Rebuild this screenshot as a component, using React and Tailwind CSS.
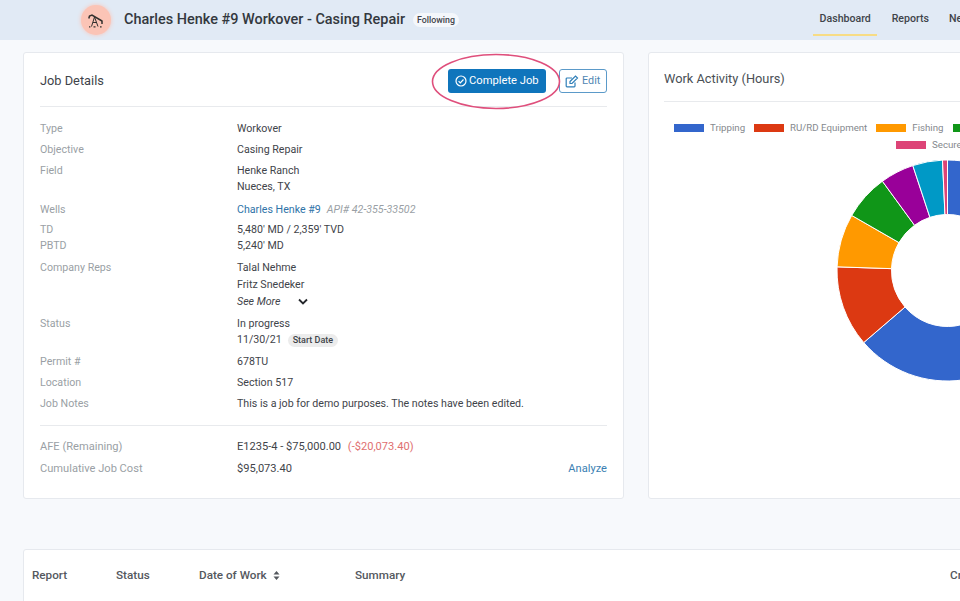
import React from "react";

function pt(r, a) {
  const t = (a * Math.PI) / 180;
  return [110.5 + r * Math.sin(t), 110.5 - r * Math.cos(t)];
}
function slice(a0, a1) {
  const R = 110.5, r = 56;
  const [x0, y0] = pt(R, a0);
  const [x1, y1] = pt(R, a1);
  const [x2, y2] = pt(r, a1);
  const [x3, y3] = pt(r, a0);
  const large = a1 - a0 > 180 ? 1 : 0;
  return `M${x0} ${y0}A${R} ${R} 0 ${large} 1 ${x1} ${y1}L${x2} ${y2}A${r} ${r} 0 ${large} 0 ${x3} ${y3}Z`;
}
const slices = [
  [0, 229.3, "#3366cc"],
  [229.3, 271.9, "#dc3912"],
  [271.9, 299.9, "#ff9900"],
  [299.9, 323.9, "#109618"],
  [323.9, 341.7, "#990099"],
  [341.7, 357.4, "#0099c6"],
  [357.4, 360, "#dd4477"],
];

function Row({ label, className = "", children }) {
  return (
    <div className={`flex leading-4 ${className}`}>
      <div className="w-[197px] shrink-0 text-[#9a9fa5]">{label}</div>
      <div className="text-[#3f444a]">{children}</div>
    </div>
  );
}

function Legend({ color, label }) {
  return (
    <span className="flex shrink-0 items-center">
      <span className="h-2 w-[30px]" style={{ background: color }} />
      {label && <span className="ml-1.5 text-[9.7px] leading-3 text-[#85898e]">{label}</span>}
    </span>
  );
}

export default function App() {
  return (
    <div className="relative h-[601px] w-[960px] overflow-hidden bg-[#f7f9fc] font-['Roboto',sans-serif] text-[10.65px]">
      <header className="flex h-10 items-center bg-[#e1eaf5] pl-[81px]">
        <div className="flex h-[30px] w-[30px] items-center justify-center rounded-full bg-[#fbc4b6] shadow-[0_0_4px_#fbc4b6]">
          <svg width="18" height="18" viewBox="0 0 18 18" fill="none" stroke="#33302e" strokeWidth="1">
            <path d="M1.8 7.5 2.5 5 5 4 15 10" strokeWidth="1.5" />
            <path d="M15 9.5v3.5" strokeWidth="1.5" />
            <path d="M7.5 6 4.5 15.5M7.5 6l3.5 9.5M6 11.5h4" />
            <path d="M2 15.8h1.4M6.5 15.8h2M13 15.8h1.6" strokeWidth="1.2" />
          </svg>
        </div>
        <h1 className="ml-[13px] text-[14.45px] font-medium text-[#33383e]">Charles Henke #9 Workover - Casing Repair</h1>
        <span className="ml-2 rounded-full bg-[#f4f7fb] px-1 text-[8.8px] font-medium leading-[14px] text-[#3f444a]">Following</span>
        <nav className="ml-auto flex h-10 shrink-0 items-start text-[10.6px] font-medium text-[#3f444a]">
          <a className="mr-[7px] h-[36px] w-16 border-b-2 border-[#f7dc85] pl-px pt-[11px] text-center leading-[15px]">Dashboard</a>
          <a className="ml-[8px] pt-[11px] leading-[15px]">Reports</a>
          <a className="ml-[20px] w-[11px] overflow-hidden pt-[11px] leading-[15px]">Ne</a>
        </nav>
      </header>

      <main className="flex items-start gap-[24px] pl-[23px] pt-3">
        <section className="h-[447px] w-[601px] shrink-0 rounded-[3px] border border-[#e6e9ee] bg-white px-4">
          <div className="flex h-[54px] items-center justify-between border-b border-[#e8eaed] pt-[3px]">
            <h2 className="text-[12.8px] text-[#3f444a]">Job Details</h2>
            <div className="flex items-center gap-[13px]">
              <button className="flex h-6 w-[98px] items-center gap-[2px] rounded-[3px] bg-[#0f75bc] pl-[7px] text-[11.2px] text-white">
                <svg width="12" height="12" viewBox="0 0 12 12" fill="none" stroke="white" strokeWidth="1.2">
                  <circle cx="6" cy="6" r="5" />
                  <path d="M3.6 6.1 5.3 7.8 8.5 4.5" />
                </svg>
                Complete Job
              </button>
              <button className="flex h-6 w-12 items-center gap-[3px] rounded-[3px] border border-[#5b9ac9] bg-white pl-[5px] text-[10.8px] text-[#4f86b3]">
                <svg width="14" height="13" viewBox="0 0 14 13" fill="none" stroke="#2f7fb8" strokeWidth="1.2">
                  <path d="M10 7.5V11a.8.8 0 0 1-.8.8H2a.8.8 0 0 1-.8-.8V3.8A.8.8 0 0 1 2 3h5" />
                  <path d="M5 6.5 10.5 1 12.5 3 7 8.5H5z" />
                </svg>
                Edit
              </button>
            </div>
          </div>

          <div className="mt-[14px]">
            <Row label="Type">Workover</Row>
            <Row label="Objective" className="mt-[5px]">Casing Repair</Row>
            <Row label="Field" className="mt-[5px]">
              <div>Henke Ranch</div>
              <div>Nueces, TX</div>
            </Row>
            <Row label="Wells" className="mt-[7px]">
              <span className="text-[#2f73a8]">Charles Henke #9</span>
              <span className="ml-1.5 italic text-[#9a9fa5]">API# 42-355-33502</span>
            </Row>
            <Row label="TD" className="mt-1">5,480' MD / 2,359' TVD</Row>
            <Row label="PBTD">5,240' MD</Row>
            <Row label="Company Reps" className="mt-1.5">
              <div>Talal Nehme</div>
              <div className="mt-px">Fritz Snedeker</div>
              <div className="mt-px flex items-center italic">
                See More
                <svg className="ml-[18px]" width="10" height="8" viewBox="0 0 10 8" fill="none" stroke="#25282c" strokeWidth="1.8">
                  <path d="M1 1.5 5 5.5 9 1.5" />
                </svg>
              </div>
            </Row>
            <Row label="Status" className="mt-1.5">
              <div>In progress</div>
              <div className="flex items-center">
                11/30/21
                <span className="ml-1.5 rounded-full bg-[#ececec] px-[5px] text-[9px] font-medium leading-[13px] text-[#3f444a]">Start Date</span>
              </div>
            </Row>
            <Row label="Permit #" className="mt-[6px]">678TU</Row>
            <Row label="Location" className="mt-[5px]">Section 517</Row>
            <Row label="Job Notes" className="mt-[5px]">This is a job for demo purposes. The notes have been edited.</Row>
          </div>

          <div className="mt-[13px] border-t border-[#e8eaed] pt-[13px] text-[11.1px]">
            <Row label="AFE (Remaining)">
              E1235-4 - $75,000.00 <span className="ml-1 text-[#e07070]">(-$20,073.40)</span>
            </Row>
            <div className="mt-1.5 flex items-center leading-4">
              <div className="w-[197px] text-[#9a9fa5]">Cumulative Job Cost</div>
              <div className="text-[#3f444a]">$95,073.40</div>
              <a className="ml-auto text-[#3b7fb3]">Analyze</a>
            </div>
          </div>
        </section>

        <section className="h-[447px] w-[600px] shrink-0 rounded-[3px] border border-[#e6e9ee] bg-white px-[15px]">
          <div className="flex h-[49px] items-center border-b border-[#e8eaed] pt-1">
            <h2 className="text-[12.8px] text-[#4a4f55]">Work Activity (Hours)</h2>
          </div>
          <div className="mt-[20px]">
            <div className="flex gap-[9px] pl-[10px]">
              <Legend color="#3366cc" label="Tripping" />
              <Legend color="#dc3912" label="RU/RD Equipment" />
              <Legend color="#ff9900" label="Fishing" />
              <Legend color="#109618" />
            </div>
            <div className="mt-[5px] flex pl-[232px]">
              <Legend color="#dd4477" label="Secure" />
            </div>
          </div>
        </section>
      </main>

      <section className="ml-[23px] mt-[50px] h-[60px] w-[1000px] rounded-t-[3px] border border-[#e6e9ee] bg-white">
        <div className="flex h-[52px] items-center border-b border-[#e8eaed] text-[11.7px] font-medium text-[#54585e]">
          <span className="ml-2 w-[84px]">Report</span>
          <span className="w-[83px]">Status</span>
          <span className="flex w-[156px] items-center">
            Date of Work
            <svg className="ml-[6px]" width="7" height="9" viewBox="0 0 7 9" fill="#54585e">
              <path d="M3.5 0 6.5 3.5H.5zM3.5 9 .5 5.5h6z" />
            </svg>
          </span>
          <span className="w-[595px]">Summary</span>
          <span>Cr</span>
        </div>
      </section>

      {/* Donut chart */}
      <svg className="absolute left-[837px] top-[160px]" width="221" height="221" viewBox="0 0 221 221">
        {slices.map(([a0, a1, c]) => (
          <path key={c} d={slice(a0, a1)} fill={c} stroke="white" strokeWidth="1" />
        ))}
      </svg>

      {/* Hand-drawn annotation */}
      <svg className="absolute left-[430px] top-[52px]" width="132" height="60" viewBox="0 0 132 60" fill="none">
        <ellipse cx="66" cy="29.5" rx="63.5" ry="27" stroke="#df4f7c" strokeWidth="1.6" />
      </svg>
    </div>
  );
}
